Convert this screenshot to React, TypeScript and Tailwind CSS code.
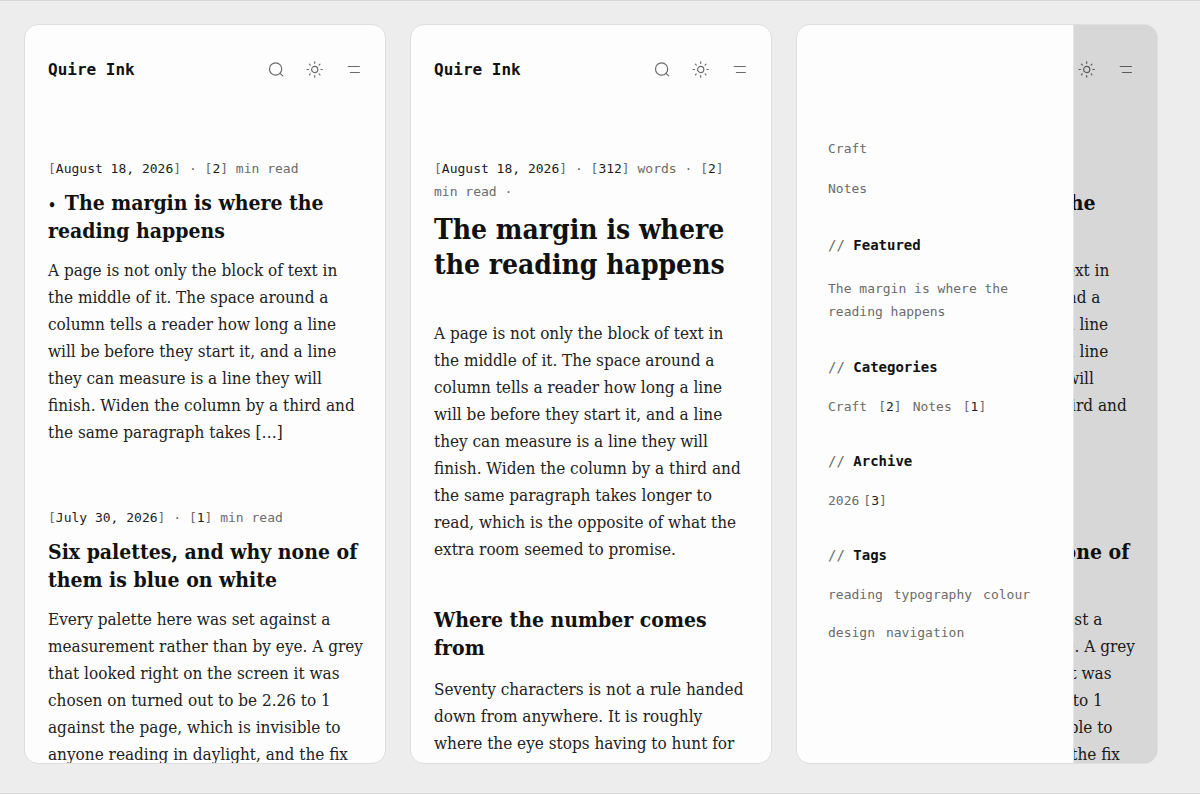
import React from "react";

const mono = "font-['DejaVu_Sans_Mono','Liberation_Mono',monospace]";
const serif = "font-['DejaVu_Serif_Condensed','DejaVu_Serif','Liberation_Serif',serif]";

function SearchIcon() {
  return (
    <svg viewBox="0 0 16 16" className="size-4" fill="none" stroke="currentColor" strokeWidth="1.2" strokeLinecap="round" aria-hidden="true">
      <circle cx="7.6" cy="7" r="6.1" />
      <path d="M12 11.4 14.8 13.9" />
    </svg>
  );
}

function SunIcon() {
  return (
    <svg viewBox="0 0 16 16" className="size-4 overflow-visible" fill="none" stroke="currentColor" strokeWidth="1.2" strokeLinecap="round" aria-hidden="true">
      <circle cx="7.7" cy="7.5" r="3.1" />
      <path d="M7.7-.2v1.5M7.7 13.7v1.5M0 7.5h1.5M13.9 7.5h1.5M2.4 2.2l.9.9M12.1 11.9l.9.9M2.4 12.8l.9-.9M12.1 3.1l.9-.9" />
    </svg>
  );
}

function MenuIcon() {
  return (
    <svg viewBox="0 0 16 16" className="size-4" fill="none" stroke="currentColor" strokeWidth="1.2" strokeLinecap="round" aria-hidden="true">
      <path d="M2.2 4.5h11.2M4.4 10.5h9" />
    </svg>
  );
}

function SiteHeader() {
  return (
    <header className="flex h-6 items-center justify-between">
      <a href="#home" className={`${mono} text-base leading-6 font-bold text-[#111]`}>
        Quire Ink
      </a>
      <div className="flex gap-[23px] text-[#6b6b6b]">
        <button type="button" aria-label="Search"><SearchIcon /></button>
        <button type="button" aria-label="Theme"><SunIcon /></button>
        <button type="button" aria-label="Menu"><MenuIcon /></button>
      </div>
    </header>
  );
}

function Bracket({ children }: { children: React.ReactNode }) {
  return (
    <span>
      [<span className="text-[#1c1c1c]">{children}</span>]
    </span>
  );
}

function Meta({ children }: { children: React.ReactNode }) {
  return <p className={`${mono} text-[13px] leading-[23px] whitespace-pre text-[#6b6b6b]`}>{children}</p>;
}

function Body({ children }: { children: React.ReactNode }) {
  return <p className={`${serif} text-[17px] leading-[27px] whitespace-pre text-[#222]`}>{children}</p>;
}

const h2 = `${serif} text-[21px] leading-7 font-bold whitespace-pre text-[#111]`;

function Phone({ children, overlay }: { children: React.ReactNode; overlay?: React.ReactNode }) {
  return (
    <section className="relative overflow-hidden rounded-[14px] border border-[#dedede] bg-[#fdfdfd] px-[23px] pt-[33px]">
      <SiteHeader />
      <div className="pt-[75px]">{children}</div>
      {overlay}
    </section>
  );
}

function PostList() {
  return (
    <div className="flex flex-col gap-15">
      <article>
        <Meta>
          <Bracket>August 18, 2026</Bracket> · <Bracket>2</Bracket> min read
        </Meta>
        <h2 className={`${h2} mt-[9px] mb-3`}>
          <span className="text-sm leading-none">{"•  "}</span>
          {"The margin is where the\nreading happens"}
        </h2>
        <Body>
          {"A page is not only the block of text in\nthe middle of it. The space around a\ncolumn tells a reader how long a line\nwill be before they start it, and a line\nthey can measure is a line they will\nfinish. Widen the column by a third and\nthe same paragraph takes […]"}
        </Body>
      </article>
      <article>
        <Meta>
          <Bracket>July 30, 2026</Bracket> · <Bracket>1</Bracket> min read
        </Meta>
        <h2 className={`${h2} mt-[9px] mb-3`}>{"Six palettes, and why none of\nthem is blue on white"}</h2>
        <Body>
          {"Every palette here was set against a\nmeasurement rather than by eye. A grey\nthat looked right on the screen it was\nchosen on turned out to be 2.26 to 1\nagainst the page, which is invisible to\nanyone reading in daylight, and the fix"}
        </Body>
      </article>
    </div>
  );
}

function Post() {
  return (
    <article>
      <Meta>
        <Bracket>August 18, 2026</Bracket> · <Bracket>312</Bracket> words · <Bracket>2</Bracket>
        {"\nmin read ·"}
      </Meta>
      <h1 className={`${serif} mt-[9px] mb-[38px] text-[28px] leading-[35px] font-bold whitespace-pre text-[#111]`}>
        {"The margin is where\nthe reading happens"}
      </h1>
      <Body>
        {"A page is not only the block of text in\nthe middle of it. The space around a\ncolumn tells a reader how long a line\nwill be before they start it, and a line\nthey can measure is a line they will\nfinish. Widen the column by a third and\nthe same paragraph takes longer to\nread, which is the opposite of what the\nextra room seemed to promise."}
      </Body>
      <h2 className={`${h2} mt-[43px] mb-[14px]`}>{"Where the number comes\nfrom"}</h2>
      <Body>
        {"Seventy characters is not a rule handed\ndown from anywhere. It is roughly\nwhere the eye stops having to hunt for"}
      </Body>
    </article>
  );
}

function DrawerSection({ title, children }: { title: string; children: React.ReactNode }) {
  return (
    <section className="mt-[31px]">
      <h3 className="text-sm leading-6">
        {"// "}
        <span className="font-bold text-[#111]">{title}</span>
      </h3>
      <div className="mt-4">{children}</div>
    </section>
  );
}

function Drawer() {
  return (
    <div className="absolute inset-0 bg-black/15">
      <nav className={`${mono} h-full w-[77%] border-r border-[#e4e4e4] bg-[#fdfdfd] pt-28 pl-[31px] text-[13px] leading-[23px] text-[#6b6b6b]`}>
        <ul className="flex flex-col gap-[17px] pb-0.5">
          <li><a href="#craft">Craft</a></li>
          <li><a href="#notes">Notes</a></li>
        </ul>
        <DrawerSection title="Featured">
          <a href="#margin" className="block pt-1 pb-px whitespace-pre">{"The margin is where the\nreading happens"}</a>
        </DrawerSection>
        <DrawerSection title="Categories">
          <p className="flex gap-[11px]">
            <a href="#craft">Craft</a>
            <Bracket>2</Bracket>
            <a href="#notes">Notes</a>
            <Bracket>1</Bracket>
          </p>
        </DrawerSection>
        <DrawerSection title="Archive">
          <p className="flex gap-1">
            <a href="#2026">2026</a>
            <Bracket>3</Bracket>
          </p>
        </DrawerSection>
        <DrawerSection title="Tags">
          <div className="flex flex-wrap gap-x-[11px] gap-y-[15px]">
            <a href="#reading">reading</a>
            <a href="#typography">typography</a>
            <a href="#colour">colour</a>
            <a href="#design">design</a>
            <a href="#navigation">navigation</a>
          </div>
        </DrawerSection>
      </nav>
    </div>
  );
}

export default function App() {
  return (
    <main className="grid h-screen grid-cols-3 grid-rows-1 gap-6 border-y border-[#d8d8d8] bg-[#ededed] pt-[23px] pr-[42px] pb-[29px] pl-6">
      <Phone><PostList /></Phone>
      <Phone><Post /></Phone>
      <Phone overlay={<Drawer />}><PostList /></Phone>
    </main>
  );
}
